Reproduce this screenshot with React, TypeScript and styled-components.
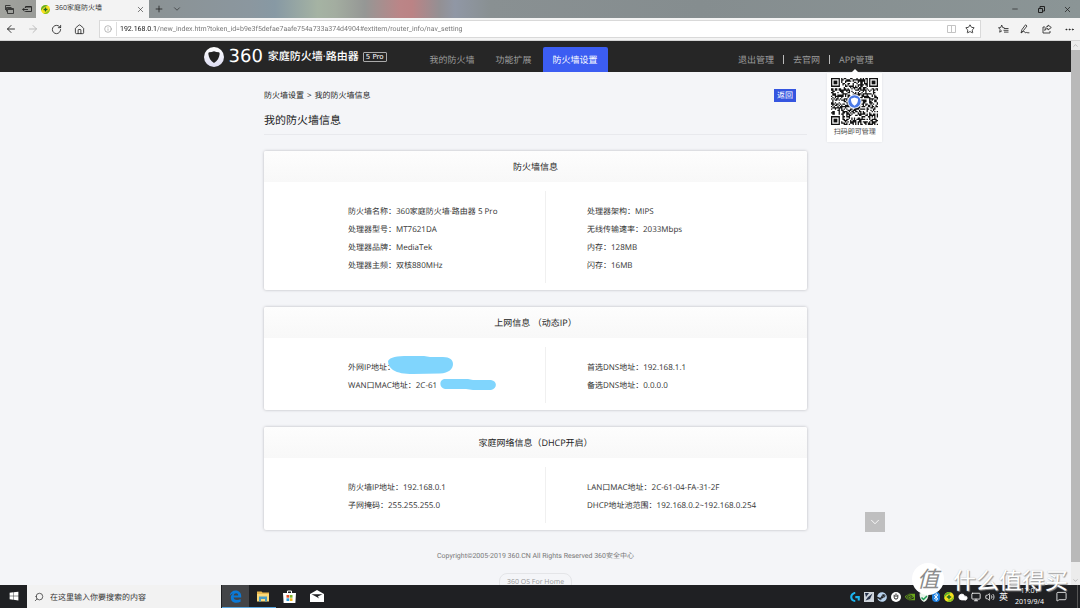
import React from "react";
import styled, { createGlobalStyle } from "styled-components";
import {
  ArrowLeft, ArrowRight, RotateCw, House, Info, X, Plus, ChevronDown, ChevronUp,
  Minus, Star, Ellipsis, Search, Monitor, Volume2, MessageSquare, Cloud,
} from "lucide-react";
import { FaSteam, FaWindows } from "react-icons/fa";
import { SiNvidia, SiLogitechg } from "react-icons/si";

const ui = `"Open Sans", "Noto Sans CJK SC", sans-serif`;

const GlobalStyle = createGlobalStyle`
  * { box-sizing: border-box; }
  body { margin: 0; background: #f4f5f8; font-family: ${ui}; color: #333; text-rendering: geometricPrecision; }
  button, input { font-family: inherit; text-rendering: inherit; }
  a { color: inherit; text-decoration: none; }
  svg { display: block; flex: none; }
`;

const Screen = styled.div`
  position: relative;
  display: flex;
  flex-direction: column;
  height: 100vh;
  overflow: hidden;
`;

/* ---------- browser chrome ---------- */

const TitleBar = styled.header`
  display: flex;
  height: 18px;
  flex: none;
  background: linear-gradient(90deg, #a2a39e 0, #999b98 36px, #8b9294 150px, #8b979f 250px, #8799a4 275px,
    #a5b3a3 318px, #a3ada0 335px, #959795 365px, #bb8587 400px, #bb8385 412px, #939094 440px, #9097a5 455px,
    #899092 490px, #858d8f 700px, #8b9596 1080px);
`;

const IconButton = styled.button<{ $w?: number; $color?: string }>`
  display: flex;
  align-items: center;
  justify-content: center;
  width: ${(p) => p.$w ?? 22}px;
  flex: none;
  padding: 0;
  border: 0;
  background: none;
  color: ${(p) => p.$color ?? "#222"};
`;

const BrowserTab = styled.div`
  display: flex;
  align-items: center;
  gap: 5px;
  width: 113px;
  padding-left: 5px;
  background: #f3f3f3;
  color: #333;
  font-size: 7px;
  line-height: 18px;
`;

const TabTitle = styled.span`
  flex: 1;
`;

const WindowControls = styled.div`
  display: flex;
  margin-left: auto;
`;

const AddressBar = styled.nav`
  display: flex;
  align-items: center;
  height: 23px;
  flex: none;
  background: #f3f3f3;
  border-bottom: 1px solid #d4d4d4;
`;

const UrlBox = styled.label`
  display: flex;
  align-items: center;
  flex: 1;
  height: 18px;
  margin: 0 11px 0 9px;
  border: 1px solid #d9d9d9;
  background: #fff;
`;

const UrlInput = styled.input`
  flex: 1;
  min-width: 0;
  height: 16px;
  padding: 0;
  border: 0;
  outline: 0;
  font-family: Roboto, sans-serif;
  font-size: 7px;
  line-height: 16px;
  color: transparent;
  background: linear-gradient(90deg, #111 37px, #707070 37px);
  background-clip: text;
  -webkit-background-clip: text;
`;

const UrlDivider = styled.span`
  width: 1px;
  height: 14px;
  margin-right: 3px;
  background: #ddd;
`;

/* ---------- page ---------- */

const Viewport = styled.div`
  position: relative;
  display: flex;
  flex: 1;
  min-height: 0;
`;

const Page = styled.div`
  position: relative;
  flex: 1;
  min-width: 0;
  overflow: hidden;
  background: #f4f5f8;
`;

const ScrollTrack = styled.div`
  display: flex;
  flex-direction: column;
  width: 9px;
  background: #ececec;
`;

const ScrollArrow = styled.button`
  display: flex;
  align-items: center;
  justify-content: center;
  height: 9px;
  flex: none;
  padding: 0;
  border: 0;
  background: #ececec;
  color: #999;
`;

const ScrollThumb = styled.div`
  height: 512px;
  margin-bottom: auto;
  flex: 0 1 auto;
  background: #b9b9b9;
`;

const SiteHeader = styled.header`
  background: #262626;
`;

const HeaderInner = styled.div`
  display: flex;
  height: 31px;
  max-width: 676px;
  margin: 0 auto;
  padding-left: 6px;
  color: #9c9c9c;
  font-size: 9px;
`;

const Brand = styled.a`
  display: flex;
  align-items: center;
  width: 216px;
  flex: none;
  color: #fff;
  white-space: nowrap;
`;

const BrandDigits = styled.span`
  margin: 0 5px;
  font: 18px/30px "DejaVu Sans", sans-serif;
`;

const BrandName = styled.span`
  font-size: 11px;
  font-weight: 500;
  line-height: 32px;
`;

const ModelBadge = styled.span`
  margin-left: 4px;
  padding: 0 2px;
  border: 1px solid #aaa;
  border-radius: 1px;
  font: 7px/8px "DejaVu Sans", sans-serif;
`;

const MainNav = styled.nav`
  display: flex;
  align-items: flex-end;
  gap: 1px;
`;

const NavLink = styled.a<{ $active?: boolean }>`
  padding: 0 10px;
  border-radius: 2px 2px 0 0;
  background: ${(p) => (p.$active ? "#3c5df2" : "none")};
  color: ${(p) => (p.$active ? "#fff" : "inherit")};
  line-height: 25px;
  white-space: nowrap;
`;

const UserNav = styled.nav`
  display: flex;
  align-items: center;
  gap: 9px;
  margin-left: auto;
  padding-top: 6px;
  line-height: 25px;
  white-space: nowrap;
`;

const Bar = styled.span`
  width: 1px;
  height: 9px;
  background: #bbb;
`;

const AppLink = styled.div`
  position: relative;
`;

const QrPopup = styled.div`
  position: absolute;
  top: 26px;
  left: 50%;
  display: flex;
  flex-direction: column;
  align-items: center;
  width: 55px;
  margin-left: -29px;
  padding: 5px 0 1px;
  background: #fff;
  box-shadow: 0 0 2px #dcdde2;
  color: #444;
  font-size: 7px;
  line-height: 16px;

  &::before {
    content: "";
    position: absolute;
    top: -4px;
    left: 24px;
    border: 4px solid transparent;
    border-top: 0;
    border-bottom-color: #fff;
  }
`;

const Main = styled.main`
  max-width: 543px;
  margin: 0 auto;
  padding-top: 17px;
`;

const TopRow = styled.div`
  display: flex;
  align-items: center;
  justify-content: space-between;
  height: 13px;
  padding-right: 11px;
  color: #222;
  font-size: 8px;
  line-height: 12px;
`;

const Breadcrumb = styled.nav`
  display: flex;
  gap: 3px;
`;

const BackButton = styled.button`
  width: 22px;
  height: 13px;
  padding: 0;
  border: 0;
  background: #3555e0;
  color: #fff;
  font-size: 8px;
  line-height: 14px;
`;

const PageTitle = styled.h1`
  margin: 10px 0 16px;
  padding-bottom: 4px;
  border-bottom: 1px solid #e8e9ed;
  color: #222;
  font-size: 11px;
  font-weight: 400;
  line-height: 18px;
`;

const Card = styled.section`
  margin-bottom: 17px;
  border-radius: 2px;
  background: #fff;
  box-shadow: 0 0 3px #b4b6bb;
`;

const CardTitle = styled.h2`
  margin: 0;
  padding-top: 1px;
  border-radius: 2px 2px 0 0;
  background: linear-gradient(#fdfdfd, #f8f8f8);
  color: #222;
  font-size: 9px;
  font-weight: 400;
  line-height: 30px;
  text-align: center;
`;

const CardBody = styled.div`
  display: grid;
  grid-template-columns: 281fr 262fr;
  padding: 9px 0 7px;
`;

const Facts = styled.dl`
  margin: 0;
  padding: 12px 0 8px 84px;
  color: #333;
  font-size: 8px;
  line-height: 18px;

  & + & {
    padding-left: 41px;
    border-left: 1px solid #f0f0f0;
  }
`;

const Fact = styled.div`
  position: relative;
  display: flex;
  white-space: pre;
`;

const Value = styled.dd`
  margin: 0;
`;

const Scribble = styled.svg<{ $left: number; $top: number }>`
  position: absolute;
  left: ${(p) => p.$left}px;
  top: ${(p) => p.$top}px;
  fill: #80d5fd;
`;

const Footer = styled.footer`
  display: flex;
  flex-direction: column;
  align-items: center;
  gap: 8px;
  padding-top: 1px;
  color: #777;
  font: 7px/17px Roboto, "Noto Sans CJK SC", sans-serif;
`;

const OsPill = styled.a`
  padding: 0 7px;
  border: 1px solid #e4e5e8;
  border-radius: 8px;
  color: #999;
  font-family: ${ui};
`;

const DownButton = styled.button`
  position: absolute;
  left: calc(50% + 329px);
  bottom: 53px;
  display: flex;
  align-items: center;
  justify-content: center;
  width: 20px;
  height: 20px;
  padding: 0;
  border: 0;
  background: #bfbfc0;
  color: #fff;
`;

/* ---------- taskbar ---------- */

const Taskbar = styled.footer`
  display: flex;
  align-items: stretch;
  height: 23px;
  flex: none;
  background: #1f2023;
  color: #fff;
`;

const SearchBox = styled.label`
  display: flex;
  align-items: center;
  gap: 6px;
  width: 194px;
  margin-right: 1px;
  padding-left: 7px;
  background: #f2f2f2;
  color: #333;
`;

const SearchInput = styled.input`
  flex: 1;
  min-width: 0;
  padding: 2px 0 0;
  border: 0;
  outline: 0;
  background: none;
  font-size: 8px;
  &::placeholder { color: #333; opacity: 1; }
`;

const TaskButton = styled.button<{ $state?: "active" | "open" }>`
  display: flex;
  align-items: center;
  justify-content: center;
  width: 27px;
  padding: 0;
  border: 0;
  border-bottom: 1px solid ${(p) => (p.$state ? "#5aa7e0" : "transparent")};
  background: ${(p) => (p.$state === "active" ? "#434447" : "none")};
  color: #fff;
`;

const Tray = styled.div`
  display: flex;
  align-items: center;
  justify-content: space-between;
  width: 158px;
  margin-left: auto;
  font-size: 9px;
`;

const Clock = styled.time`
  display: flex;
  flex-direction: column;
  justify-content: center;
  width: 43px;
  font-size: 7px;
  line-height: 11px;
  text-align: center;
`;

const ShowDesktop = styled.button`
  width: 3px;
  margin-left: 6px;
  padding: 0;
  border: 0;
  border-left: 1px solid #555;
  background: none;
`;

const Watermark = styled.div`
  position: absolute;
  right: 12px;
  bottom: 13px;
  display: flex;
  align-items: center;
  gap: 9px;
  color: #fff;
  font-family: "Noto Sans CJK SC", sans-serif;
  font-size: 23px;
  line-height: 30px;
  text-shadow: 1px 1px 1px #999, 0 0 1px #bbb;
  pointer-events: none;
`;

const WatermarkSeal = styled.span`
  width: 32px;
  height: 32px;
  border-radius: 16px;
  background: #fff;
  color: #8b8b8b;
  font-size: 22px;
  font-style: italic;
  line-height: 31px;
  text-align: center;
  text-shadow: none;
`;

/* ---------- drawings ---------- */

const N = 37;
const inFinder = (x: number, y: number) =>
  (x < 8 && y < 8) || (x > N - 9 && y < 8) || (x < 8 && y > N - 9);

function qrPath() {
  let seed = 36005;
  let d = "";
  for (let y = 0; y < N; y++) {
    for (let x = 0; x < N; x++) {
      seed = (seed * 1103515245 + 12345) % 2147483648;
      if (!inFinder(x, y) && (seed >> 16) % 100 < 52) d += `M${x} ${y}h1v1h-1z`;
    }
  }
  return d;
}
const QR_MODULES = qrPath();

const QrCode = () => (
  <svg width="47" height="47" viewBox={`0 0 ${N} ${N}`} role="img" aria-label="QR">
    <path d={QR_MODULES} fill="#111" />
    {[[0, 0], [N - 7, 0], [0, N - 7]].map(([x, y]) => (
      <g key={`${x}-${y}`} fill="#111">
        <path fillRule="evenodd" d={`M${x} ${y}h7v7h-7zM${x + 1} ${y + 1}v5h5v-5z`} />
        <path d={`M${x + 2} ${y + 2}h3v3h-3z`} />
      </g>
    ))}
    <circle cx="18.5" cy="18.5" r="5.6" fill="#fff" />
    <circle cx="18.5" cy="18.5" r="4.9" fill="#4a7ae6" />
    <path d="M18.5 15.4 21.3 16.4C21.4 19 20.4 20.8 18.5 21.8 16.6 20.8 15.6 19 15.7 16.4Z" fill="#fff" />
  </svg>
);

const ShieldLogo = () => (
  <svg width="20" height="20" viewBox="0 0 20 20">
    <defs>
      <linearGradient id="ring" x1="0" y1="0" x2="0" y2="1">
        <stop offset="0" stopColor="#fff" />
        <stop offset="1" stopColor="#dcdcf2" />
      </linearGradient>
    </defs>
    <circle cx="10" cy="10" r="10" fill="url(#ring)" />
    <path d="M10 4.2C11.6 4.9 13.2 5.2 14.7 5.3 15.6 5.5 15.7 6.2 15.6 7.2 15.2 10.8 13.4 13.9 10 16 6.6 13.9 4.8 10.8 4.4 7.2 4.3 6.2 4.4 5.5 5.3 5.3 6.8 5.2 8.4 4.9 10 4.2Z" fill="#222" />
  </svg>
);

const PlusBall = ({ size }: { size: number }) => (
  <svg width={size} height={size} viewBox="0 0 10 10">
    <circle cx="5" cy="5" r="5" fill="#f7e11e" />
    <path d="M5 0A5 5 0 0 0 .2 6.2C1.5 3.2 4 1.8 7.5 .7A5 5 0 0 0 5 0Z" fill="#5cae2a" />
    <path d="M2.5 9.3A5 5 0 0 0 9.8 3.8C8.5 6.8 6 8.2 2.5 9.3Z" fill="#8dc21f" />
    <path d="M4.3 2.8h1.4v1.5h1.5v1.4H5.7v1.5H4.3V5.7H2.8V4.3h1.5z" fill="#1c6b22" />
  </svg>
);

const TabsListIcon = () => (
  <svg width="9" height="9" viewBox="0 0 9 9" fill="none" stroke="#222">
    <path d="M2.5 3.5h6v5h-6zM3 4.5h5M1.5 6.5v-4h5M.5 5V.5h5" strokeWidth=".8" />
  </svg>
);

const TabsAsideIcon = () => (
  <svg width="10" height="10" viewBox="0 0 10 10" fill="none" stroke="#222">
    <path d="M3.5 4V2.500h6v5h-6V7M4 3h5M.5 5.500H6M2.500 3.800.8 5.500l1.700 1.700" strokeWidth=".9" />
  </svg>
);

const RestoreIcon = () => (
  <svg width="7" height="7" viewBox="0 0 7 7" fill="none" stroke="#222">
    <path d="M.5 2.500h4v4h-4zM2 2V.5h4.500v4.500H5" />
  </svg>
);

const ReadingIcon = () => (
  <svg width="9" height="8" viewBox="0 0 9 8" fill="none" stroke="#c4c4c4">
    <path d="M.5.5h8v7h-8zM4.500.5v7" />
  </svg>
);

const ShareIcon = () => (
  <svg width="10" height="10" viewBox="0 0 10 10" fill="none" stroke="#333" strokeWidth=".9">
    <path d="M3 3H1v6h7V7M6 1l3.300 2.500L6 6V4.600C4.500 4.500 3.500 5 2.800 6.500 3 4 4 2.600 6 2.400Z" />
  </svg>
);

const InkIcon = () => (
  <svg width="10" height="10" viewBox="0 0 10 10" fill="none" stroke="#333" strokeWidth=".9">
    <path d="M1 9 2 5.500 5.500.8 7 2 3.500 6.500 1 9c2-1.500 3-2 3.600-1.300.4.700.2 1.300 1 .9.900-.600 1.400.500 3.800.2" />
  </svg>
);

const FavoritesIcon = () => (
  <svg width="11" height="10" viewBox="0 0 11 10" fill="none" stroke="#333" strokeWidth=".9">
    <path d="M6.500 3.800 4.700 3.600 3.700 1 2.700 3.600.5 3.800 2.200 5.400 1.700 8.200 4 6.700M6 4.500h4.500M5.500 6.300h5M6 8.100h4.500" />
  </svg>
);

const EdgeIcon = () => (
  <svg width="13" height="13" viewBox="0 0 13 13">
    <path
      d="M.7 5.800C1.200 2.500 3.500.5 6.600.5c3.600 0 5.600 2.600 5.600 5.700v1.400H4.600c.2 1.700 1.600 2.500 3.400 2.500 1.400 0 2.500-.4 3.600-1v2.600c-1.200.7-2.700 1-4.200 1-3.300 0-5.600-1.900-5.600-5 0-1.900 1-3.400 2.600-4.200C2.900 3.900 1.700 4.600.7 5.800Zm4-.4h4.500c0-1.300-.7-2.100-2.100-2.100-1.300 0-2.100.8-2.400 2.100Z"
      fill="#0b7ad8"
      fillRule="evenodd"
    />
  </svg>
);

const FolderIcon = () => (
  <svg width="12" height="11" viewBox="0 0 12 11">
    <path d="M0 .5h4.500l1 1H12V10H0z" fill="#e9b84e" />
    <path d="M0 3h12v7.500H0z" fill="#fbd978" />
    <path d="M2 5.500h8v5H8V8H4v2.500H2z" fill="#4a9cc4" />
  </svg>
);

const StoreIcon = () => (
  <svg width="13" height="13" viewBox="0 0 13 13">
    <path d="M4.500 3.500V1h4v2.500" fill="none" stroke="#fff" />
    <path d="M0 3h13l-.6 10H.6z" fill="#fff" />
    <path d="M3.500 5h2.700v2.700H3.500z" fill="#e8502a" />
    <path d="M6.800 5h2.700v2.700H6.800z" fill="#7db52b" />
    <path d="M3.500 8.300h2.700V11H3.500z" fill="#2a9fe0" />
    <path d="M6.800 8.300h2.700V11H6.800z" fill="#f5b81c" />
  </svg>
);

const MailIcon = () => (
  <svg width="14" height="12" viewBox="0 0 14 12">
    <path d="M0 4 7 0l7 4v8H0z" fill="#fff" />
    <path d="M1.500 4.200h11L7.800 6.600l1.400 2L5.800 6.500z" fill="#1f2023" />
  </svg>
);

const SatelliteIcon = () => (
  <svg width="10" height="10" viewBox="0 0 10 10">
    <path d="M0 0h10v10H0z" fill="#cfd5dc" />
    <path d="M1 1h4L2 5zM8.500 1.500 4 5l-2.500 3.500L6 7z" fill="#26324a" />
  </svg>
);

const PowerIcon = () => (
  <svg width="10" height="10" viewBox="0 0 10 10">
    <circle cx="5" cy="5" r="5" fill="#fff" />
    <path d="M3.200 2.800v2.500a1.800 1.800 0 0 0 3.600 0V2.800M5 1.500v3.500" fill="none" stroke="#222" />
  </svg>
);

const GuardIcon = () => (
  <svg width="10" height="10" viewBox="0 0 10 10">
    <path d="M5 0 9.500 1.500C9.500 6 8 8.800 5 10 2 8.800.5 6 .5 1.500z" fill="#e9f3ea" />
    <path d="m2.500 5.500 2 2 3.500-3.500" fill="none" stroke="#1f9d55" strokeWidth="1.500" />
  </svg>
);

const BluetoothIcon = () => (
  <svg width="8" height="10" viewBox="0 0 8 10">
    <rect width="8" height="10" rx="4" fill="#1c7fe0" />
    <path d="m2 3.200 4 3.600-2 1.700v-7l2 1.700-4 3.600" fill="none" stroke="#fff" strokeWidth=".9" />
  </svg>
);

/* ---------- data ---------- */

type Item = { label: string; value?: string; mask?: "large" | "small" };
type Panel = { title: string; left: Item[]; right: Item[] };

const panels: Panel[] = [
  {
    title: "防火墙信息",
    left: [
      { label: "防火墙名称：", value: "360家庭防火墙·路由器 5 Pro" },
      { label: "处理器型号：", value: "MT7621DA" },
      { label: "处理器品牌：", value: "MediaTek" },
      { label: "处理器主频：", value: "双核880MHz" },
    ],
    right: [
      { label: "处理器架构：", value: "MIPS" },
      { label: "无线传输速率：", value: "2033Mbps" },
      { label: "内存：", value: "128MB" },
      { label: "闪存：", value: "16MB" },
    ],
  },
  {
    title: "上网信息 （动态IP）",
    left: [
      { label: "外网IP地址：", mask: "large" },
      { label: "WAN口MAC地址：", value: "2C-61", mask: "small" },
    ],
    right: [
      { label: "首选DNS地址：", value: "192.168.1.1" },
      { label: "备选DNS地址：", value: "0.0.0.0" },
    ],
  },
  {
    title: "家庭网络信息（DHCP开启）",
    left: [
      { label: "防火墙IP地址：", value: "192.168.0.1" },
      { label: "子网掩码：", value: "255.255.255.0" },
    ],
    right: [
      { label: "LAN口MAC地址：", value: "2C-61-04-FA-31-2F" },
      { label: "DHCP地址池范围：", value: "192.168.0.2~192.168.0.254" },
    ],
  },
];

const FactList = ({ items }: { items: Item[] }) => (
  <Facts>
    {items.map((item) => (
      <Fact key={item.label}>
        <dt>{item.label}</dt>
        <Value>{item.value}</Value>
        {item.mask === "large" && (
          <Scribble $left={40} $top={-3} width="65" height="18" viewBox="0 0 65 18">
            <path d="M0 5C2 1 9 0 20 0H36L42 1H55C62 1 65 4 65 8 65 13 61 17 52 17.500L25 18C16 18 10 17 5 14 2 12 0 9 0 5Z" />
          </Scribble>
        )}
        {item.mask === "small" && (
          <Scribble $left={92} $top={2} width="56" height="11" viewBox="0 0 56 11">
            <path d="M4 0H28L33 1H51C58 2 57 10 51 11H33L26 10H5C-1 9-1 1 4 0Z" />
          </Scribble>
        )}
      </Fact>
    ))}
  </Facts>
);

export default function App() {
  return (
    <Screen>
      <GlobalStyle />
      <TitleBar>
        <IconButton $w={18} aria-label="Tabs set aside"><TabsListIcon /></IconButton>
        <IconButton $w={18} aria-label="Set tabs aside"><TabsAsideIcon /></IconButton>
        <BrowserTab>
          <PlusBall size={9} />
          <TabTitle>360家庭防火墙</TabTitle>
          <IconButton $w={18} aria-label="Close tab"><X size={9} strokeWidth={1.5} /></IconButton>
        </BrowserTab>
        <IconButton $w={20} aria-label="New tab"><Plus size={10} /></IconButton>
        <IconButton $w={16} aria-label="Tab previews"><ChevronDown size={10} strokeWidth={1.5} /></IconButton>
        <WindowControls>
          <IconButton $w={26} aria-label="Minimize"><Minus size={8} /></IconButton>
          <IconButton $w={26} aria-label="Restore"><RestoreIcon /></IconButton>
          <IconButton $w={26} aria-label="Close"><X size={9} /></IconButton>
        </WindowControls>
      </TitleBar>

      <AddressBar>
        <IconButton aria-label="Back"><ArrowLeft size={12} strokeWidth={1.8} /></IconButton>
        <IconButton aria-label="Forward" $color="#b5b5b5"><ArrowRight size={12} strokeWidth={1.8} /></IconButton>
        <IconButton $w={24} aria-label="Refresh"><RotateCw size={11} strokeWidth={1.8} /></IconButton>
        <IconButton aria-label="Home"><House size={11} strokeWidth={1.8} /></IconButton>
        <UrlBox>
          <IconButton $w={16} as="span" $color="#999"><Info size={8} /></IconButton>
          <UrlDivider />
          <UrlInput
            aria-label="Address"
            defaultValue="192.168.0.1/new_index.htm?token_id=b9e3f5defae7aafe754a733a374d4904#extitem/router_info/nav_setting"
          />
          <IconButton $w={18} aria-label="Reading view"><ReadingIcon /></IconButton>
          <IconButton $w={20} aria-label="Add to favorites"><Star size={10} /></IconButton>
        </UrlBox>
        <IconButton aria-label="Favorites"><FavoritesIcon /></IconButton>
        <IconButton aria-label="Notes"><InkIcon /></IconButton>
        <IconButton aria-label="Share"><ShareIcon /></IconButton>
        <IconButton aria-label="More"><Ellipsis size={11} /></IconButton>
      </AddressBar>

      <Viewport>
        <Page>
          <SiteHeader>
            <HeaderInner>
              <Brand href="#home">
                <ShieldLogo />
                <BrandDigits>360</BrandDigits>
                <BrandName>家庭防火墙·路由器</BrandName>
                <ModelBadge>5 Pro</ModelBadge>
              </Brand>
              <MainNav>
                <NavLink href="#mine">我的防火墙</NavLink>
                <NavLink href="#features">功能扩展</NavLink>
                <NavLink href="#settings" $active>防火墙设置</NavLink>
              </MainNav>
              <UserNav>
                <a href="#logout">退出管理</a>
                <Bar />
                <a href="#site">去官网</a>
                <Bar />
                <AppLink>
                  <a href="#app">APP管理</a>
                  <QrPopup>
                    <QrCode />
                    扫码即可管理
                  </QrPopup>
                </AppLink>
              </UserNav>
            </HeaderInner>
          </SiteHeader>

          <Main>
            <TopRow>
              <Breadcrumb>
                <a href="#settings">防火墙设置</a>
                <span>&gt;</span>
                <span>我的防火墙信息</span>
              </Breadcrumb>
              <BackButton>返回</BackButton>
            </TopRow>
            <PageTitle>我的防火墙信息</PageTitle>
            {panels.map((panel) => (
              <Card key={panel.title}>
                <CardTitle>{panel.title}</CardTitle>
                <CardBody>
                  <FactList items={panel.left} />
                  <FactList items={panel.right} />
                </CardBody>
              </Card>
            ))}
          </Main>

          <Footer>
            <span>Copyright©2005-2019 360.CN All Rights Reserved 360安全中心</span>
            <OsPill href="#os">360 OS For Home</OsPill>
          </Footer>
          <DownButton aria-label="Scroll down"><ChevronDown size={14} strokeWidth={1.5} /></DownButton>
        </Page>
        <ScrollTrack>
          <ScrollArrow aria-label="Scroll up"><ChevronUp size={7} /></ScrollArrow>
          <ScrollThumb />
          <ScrollArrow aria-label="Scroll page down"><ChevronDown size={7} /></ScrollArrow>
        </ScrollTrack>
      </Viewport>

      <Taskbar>
        <TaskButton aria-label="Start"><FaWindows size={10} /></TaskButton>
        <SearchBox>
          <Search size={10} strokeWidth={1.8} style={{ transform: "scaleX(-1)" }} />
          <SearchInput aria-label="Search" placeholder="在这里输入你要搜索的内容" />
        </SearchBox>
        <TaskButton $state="active" aria-label="Edge"><EdgeIcon /></TaskButton>
        <TaskButton $state="open" aria-label="File Explorer"><FolderIcon /></TaskButton>
        <TaskButton aria-label="Store"><StoreIcon /></TaskButton>
        <TaskButton aria-label="Mail"><MailIcon /></TaskButton>
        <Tray>
          <SiLogitechg size={10} color="#1cb5ee" />
          <SatelliteIcon />
          <FaSteam size={10} color="#b9d3ee" />
          <PowerIcon />
          <SiNvidia size={10} color="#6aa61c" />
          <GuardIcon />
          <BluetoothIcon />
          <PlusBall size={10} />
          <Cloud size={10} fill="#fff" />
          <Monitor size={10} />
          <Volume2 size={10} />
          <span>英</span>
        </Tray>
        <Clock>
          <span>17:01</span>
          <span>2019/9/4</span>
        </Clock>
        <IconButton $w={20} $color="#fff" aria-label="Notifications"><MessageSquare size={11} strokeWidth={1.8} /></IconButton>
        <ShowDesktop aria-label="Show desktop" />
      </Taskbar>

      <Watermark>
        <WatermarkSeal>值</WatermarkSeal>
        什么值得买
      </Watermark>
    </Screen>
  );
}
